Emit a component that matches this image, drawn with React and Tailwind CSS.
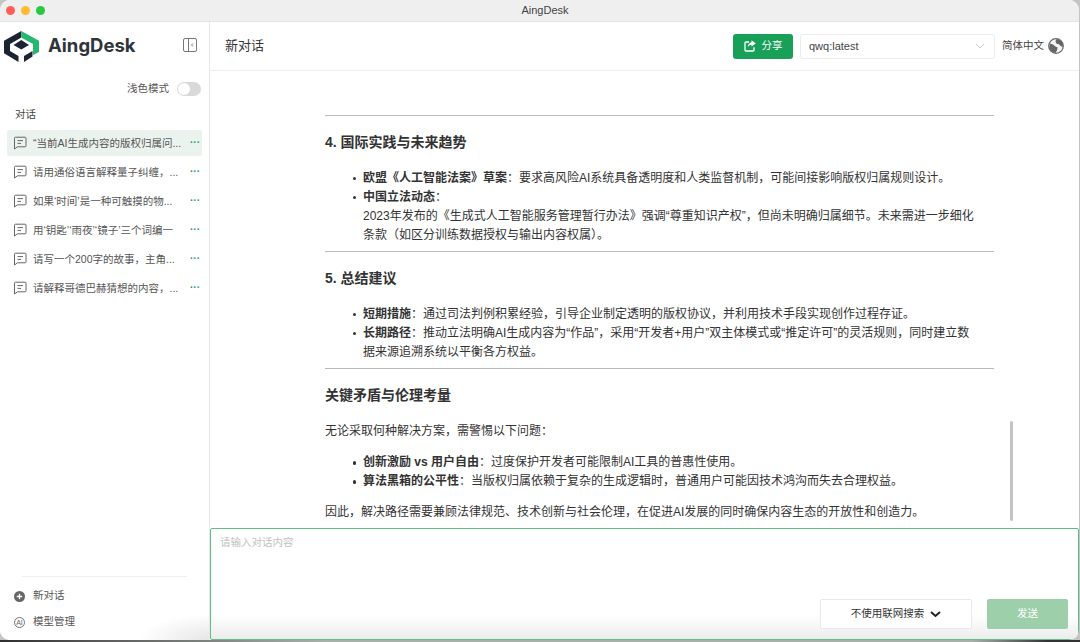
const FONT = "font-['Liberation_Sans','Noto_Sans_CJK_SC',sans-serif]";

const chats = [
  { title: "“当前AI生成内容的版权归属问...", active: true },
  { title: "请用通俗语言解释量子纠缠，..." },
  { title: "如果‘时间’是一种可触摸的物..." },
  { title: "用‘钥匙’‘雨夜’‘镜子’三个词编一" },
  { title: "请写一个200字的故事，主角..." },
  { title: "请解释哥德巴赫猜想的内容，..." },
];

function ChatIcon() {
  return (
    <svg width="14" height="14" viewBox="0 0 14 14" fill="none" stroke="#666" strokeWidth="1" className="shrink-0">
      <path d="M1.5 2.2 a1 1 0 0 1 1-1 h9.5 a1 1 0 0 1 1 1 v7.6 a1 1 0 0 1-1 1 H4.5 L1.5 13 Z" />
      <path d="M4.5 4.6 h5.5 M4.5 7.4 h3.5" />
    </svg>
  );
}

function Logo() {
  return (
    <svg width="35" height="32" viewBox="0 0 35 32" className="shrink-0 mt-[2px]">
      <path d="M17.3 0 L0 9.7 V22.3 L14.5 31 V25 L6 20 V13 L17.3 6.5 Z" fill="#1c2333" />
      <path d="M17.3 0 L35 9.7 V21 L29 24 V13 L17.3 6.5 Z" fill="#25b871" />
      <path d="M17.3 9 L25 14 L17.3 18.5 L9.5 14 Z" fill="#1c2333" />
      <path d="M20 25 L28.5 20 V25.5 L20 31 Z" fill="#1c2333" />
    </svg>
  );
}

function Globe() {
  return (
    <svg width="16" height="16" viewBox="0 0 16 16" className="ml-[4px] shrink-0">
      <circle cx="8" cy="8" r="7.3" fill="#f4f4f4" stroke="#6b6b6b" strokeWidth="1.3" />
      <path d="M8.5 1 C11 1.2 13.5 2.6 15 5.5 L14.6 9 L12.6 8 L11 6.2 L8.6 5.8 L7.4 3.6 Z" fill="#666" />
      <path d="M2 5.5 L5 6.6 L7.4 8.4 L9.6 9.6 L9 12.6 L7.4 15 C4.6 14.6 2.2 12.6 1.2 10 Z" fill="#666" />
    </svg>
  );
}

function ShareIcon() {
  return (
    <svg width="12" height="12" viewBox="0 0 12 12" className="shrink-0">
      <path d="M5 2 H2 a1 1 0 0 0-1 1 v7 a1 1 0 0 0 1 1 h7 a1 1 0 0 0 1-1 V7.2" fill="none" stroke="#fff" strokeWidth="1.3" />
      <path d="M7.5 0.3 L11.8 3.4 L7.5 6.5 V4.8 C5.6 4.8 4.6 5.6 3.8 7.6 C3.8 4.6 5.4 2.4 7.5 2.2 Z" fill="#fff" />
    </svg>
  );
}

function Sidebar() {
  return (
    <aside className="relative w-[210px] shrink-0 flex flex-col border-r border-[#e8e8e8] bg-white">
      <div className="flex items-center h-[48px] pl-1 pr-3">
        <Logo />
        <span className="ml-[9px] text-[18.5px] font-bold text-[#2f333a] font-['Inter',sans-serif]">AingDesk</span>
        <svg width="14" height="14" viewBox="0 0 14 14" fill="none" stroke="#777" strokeWidth="1" className="ml-auto mt-[-2px]">
          <rect x="0.5" y="0.5" width="13" height="13" rx="1.5" />
          <path d="M5.5 0.5 v13" />
          <path d="M10 5.5 L8.5 7 L10 8.5" />
        </svg>
      </div>
      <div className="flex items-center justify-end gap-2 pr-2 mt-[11px] h-[16px]">
        <span className="text-[10.5px] text-[#555]">浅色模式</span>
        <span className="w-6 h-[14px] rounded-full bg-[#d9d9d9] p-[1px]">
          <span className="block w-3 h-3 rounded-full bg-white" />
        </span>
      </div>
      <div className="text-[10.5px] text-[#444] pl-[15px] mt-[9px] h-[16px] leading-[16px]">对话</div>
      <ul className="mt-[8px] px-[7px] flex flex-col gap-[3px]">
        {chats.map((c) => (
          <li
            key={c.title}
            className={`flex items-center h-[26px] pl-[6px] pr-[2px] gap-[6px] ${c.active ? "bg-[#ebf3ee] rounded-[2px]" : ""}`}
          >
            <ChatIcon />
            <span className="flex-1 whitespace-nowrap overflow-hidden text-[10.5px] leading-[26px] text-[#555]">{c.title}</span>
            <span className="text-[#18a058] text-[10px] font-bold leading-none">···</span>
          </li>
        ))}
      </ul>
      <div className="mt-auto mx-[22px] border-t border-[#eeeeee]" />
      <div className="pl-[14px] pt-[10px] pb-[9px] flex flex-col gap-[8px]">
        <div className="flex items-center gap-2 h-[18px]">
          <svg width="11" height="11" viewBox="0 0 11 11" className="shrink-0">
            <circle cx="5.5" cy="5.5" r="5.5" fill="#666" />
            <path d="M5.5 2.8 v5.4 M2.8 5.5 h5.4" stroke="#fff" strokeWidth="1.3" />
          </svg>
          <span className="text-[10.5px] text-[#555]">新对话</span>
        </div>
        <div className="flex items-center gap-2 h-[18px]">
          <span className="w-[11px] h-[11px] rounded-full border border-[#777] text-[#666] text-[7px] leading-[9px] text-center overflow-hidden">AI</span>
          <span className="text-[10.5px] text-[#555]">模型管理</span>
        </div>
      </div>
      <span className="absolute right-0 bottom-0 w-[70px] h-[26px] bg-[radial-gradient(ellipse_at_bottom_right,#e6e6e6,transparent_70%)]" />
    </aside>
  );
}

function Header() {
  return (
    <header className="h-[49px] shrink-0 flex items-center border-b border-[#eeeeee] pl-[15px] pr-[15px]">
      <h1 className="text-[13px] text-[#333]">新对话</h1>
      <button className="ml-auto w-[60px] h-[25px] rounded-[3px] bg-[#18a058] text-white text-[10.5px] flex items-center justify-center gap-[6px]">
        <ShareIcon />
        分享
      </button>
      <div className="ml-[7px] w-[195px] h-[25px] rounded-[3px] border border-[#ececec] flex items-center px-[8px] text-[#444] text-[11px]">
        qwq:latest
        <svg width="10" height="6" viewBox="0 0 10 6" fill="none" stroke="#ccc" className="ml-auto mr-[1px]">
          <path d="M1 1 L5 5 L9 1" />
        </svg>
      </div>
      <span className="ml-[7px] text-[10.5px] text-[#444]">简体中文</span>
      <Globe />
    </header>
  );
}

function Divider() {
  return <hr className="border-t border-[#b9b9b9]" />;
}

function Heading({ children }) {
  return <h3 className="font-bold text-[14px] text-[#333] leading-[20px] mt-[16px] mb-[16.5px]">{children}</h3>;
}

function Item({ label, children }) {
  return (
    <li className="flex">
      <span className="w-[3.5px] pt-[8px] mr-[7px] shrink-0">
        <span className="block w-[3.5px] h-[3.5px] rounded-full bg-[#333]" />
      </span>
      <div className="flex-1">
        <b className="font-bold">{label}</b>
        {children}
      </div>
    </li>
  );
}

function Article() {
  return (
    <article className="pl-[115px] pr-[85px] pt-[44px] text-[12px] leading-[19px] text-[#333]">
      <Divider />
      <Heading>4. 国际实践与未来趋势</Heading>
      <ul className="pl-[27.5px] pr-[14px]">
        <Item label="欧盟《人工智能法案》草案">：要求高风险AI系统具备透明度和人类监督机制，可能间接影响版权归属规则设计。</Item>
        <Item label="中国立法动态">
          ：<br />
          2023年发布的《生成式人工智能服务管理暂行办法》强调“尊重知识产权”，但尚未明确归属细节。未来需进一步细化条款（如区分训练数据授权与输出内容权属）。
        </Item>
      </ul>
      <div className="h-[6.5px]" />
      <Divider />
      <Heading>5. 总结建议</Heading>
      <ul className="pl-[27.5px] pr-[14px]">
        <Item label="短期措施">：通过司法判例积累经验，引导企业制定透明的版权协议，并利用技术手段实现创作过程存证。</Item>
        <Item label="长期路径">：推动立法明确AI生成内容为“作品”，采用“开发者+用户”双主体模式或“推定许可”的灵活规则，同时建立数据来源追溯系统以平衡各方权益。</Item>
      </ul>
      <div className="h-[6.5px]" />
      <Divider />
      <Heading>关键矛盾与伦理考量</Heading>
      <p>无论采取何种解决方案，需警惕以下问题：</p>
      <ul className="pl-[27.5px] pr-[14px] mt-[12.5px]">
        <Item label="创新激励 vs 用户自由">：过度保护开发者可能限制AI工具的普惠性使用。</Item>
        <Item label="算法黑箱的公平性">：当版权归属依赖于复杂的生成逻辑时，普通用户可能因技术鸿沟而失去合理权益。</Item>
      </ul>
      <p className="mt-[12px]">因此，解决路径需要兼顾法律规范、技术创新与社会伦理，在促进AI发展的同时确保内容生态的开放性和创造力。</p>
    </article>
  );
}

function InputBox() {
  return (
    <div className="h-[112px] shrink-0 border border-[#62bd8d] rounded-[2px] flex flex-col pl-[9px] pr-[10px] pt-[5px] pb-[10px] bg-[linear-gradient(180deg,#ffffff_78%,#ececec_100%)]">
      <div className="text-[10.5px] leading-[16px] text-[#c2c2c2]">请输入对话内容</div>
      <div className="mt-auto flex justify-end gap-[15px]">
        <button className="w-[152px] h-[30px] bg-white border border-[#e8e8e8] rounded-[2px] flex items-center justify-center gap-[6px] text-[10.5px] text-[#333]">
          不使用联网搜索
          <svg width="11" height="7" viewBox="0 0 11 7" fill="none" stroke="#222" strokeWidth="2">
            <path d="M1 1 L5.5 5 L10 1" />
          </svg>
        </button>
        <button className="w-[81px] h-[30px] rounded-[2px] bg-[#9ccfaa] text-white text-[10.5px]">发送</button>
      </div>
    </div>
  );
}

export default function App() {
  return (
    <div className={`w-[1080px] h-[642px] overflow-hidden bg-[#c4c4c4] ${FONT}`}>
      <div className="w-[1079px] h-[640px] rounded-[10px] overflow-hidden bg-white flex flex-col">
        <div className="h-[22px] shrink-0 bg-[#efefef] border-b border-[#e4e4e4] flex items-center">
          <div className="flex gap-[6px] pl-[6px]">
            <span className="w-[9px] h-[9px] rounded-full bg-[#ff5f57]" />
            <span className="w-[9px] h-[9px] rounded-full bg-[#febc2e]" />
            <span className="w-[9px] h-[9px] rounded-full bg-[#28c840]" />
          </div>
          <span className="flex-1 text-center text-[11px] font-medium text-[#444] pr-[34px]">AingDesk</span>
        </div>
        <div className="flex flex-1 min-h-0">
          <Sidebar />
          <main className="flex-1 min-w-0 flex flex-col">
            <Header />
            <div className="flex-1 min-h-0 overflow-hidden relative">
              <Article />
              <span className="absolute right-[66px] bottom-[7px] w-[3.5px] h-[100px] rounded-full bg-[#c4c4c4]" />
            </div>
            <InputBox />
          </main>
        </div>
      </div>
      <div className="h-[2px] bg-[linear-gradient(90deg,#2e2e2e_0%,#555_8%,#a8b0aa_30%,#a8b0aa_90%,#333_97%)]" />
    </div>
  );
}
